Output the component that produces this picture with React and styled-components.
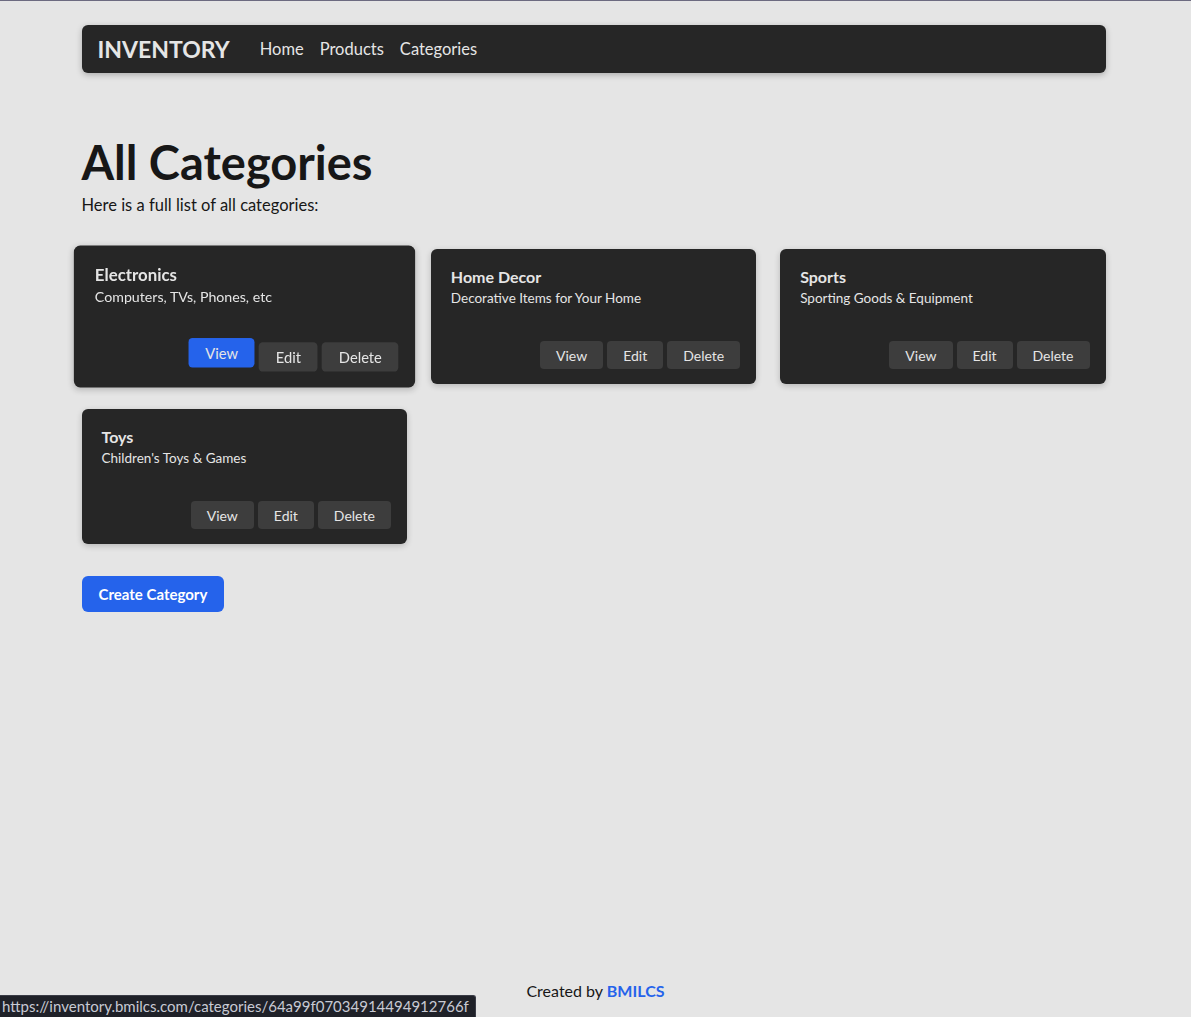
import React from "react";
import styled, { createGlobalStyle } from "styled-components";

const GlobalStyle = createGlobalStyle`
  * {
    box-sizing: border-box;
  }
  html, body {
    margin: 0;
    padding: 0;
  }
  body {
    background: #e5e5e5;
    color: #171717;
    font-family: Lato, "Noto Sans", sans-serif;
    border-top: 1px solid #6c6a80;
  }
`;

const Page = styled.div`
  min-height: calc(100vh - 1px);
  display: flex;
  flex-direction: column;
`;

const Main = styled.main`
  width: 1024px;
  margin: 0 0 0 calc(50% - 514px);
  padding-top: 24px;
  flex: 1;
`;

const Nav = styled.nav`
  height: 48px;
  background: #262626;
  border-radius: 6px;
  box-shadow: 0 2px 6px rgba(0, 0, 0, 0.25);
  display: flex;
  align-items: center;
  padding: 0 16px;
  gap: 30px;
`;

const Logo = styled.a`
  color: #e5e5e5;
  font-size: 23px;
  font-weight: 700;
  text-decoration: none;
`;

const NavLinks = styled.div`
  display: flex;
  gap: 16px;
`;

const NavLink = styled.a`
  color: #e5e5e5;
  font-size: 16.5px;
  text-decoration: none;
`;

const Title = styled.h1`
  margin: 66px 0 0;
  font-size: 47px;
  font-weight: 700;
  line-height: 1;
`;

const Subtitle = styled.p`
  margin: 9px 0 0;
  font-size: 16.5px;
`;

const Grid = styled.div`
  margin-top: 34px;
  display: grid;
  grid-template-columns: repeat(3, 1fr);
  column-gap: 24px;
  row-gap: 25px;
`;

const Card = styled.div`
  background: #262626;
  color: #e5e5e5;
  border-radius: 6px;
  height: 135px;
  padding: 18px 16px 15px 20px;
  display: flex;
  flex-direction: column;
  box-shadow: 0 2px 6px rgba(0, 0, 0, 0.2);
  transform: ${(p) => (p.$hover ? "scale(1.05)" : "none")};
`;

const CardTitle = styled.h3`
  margin: 0;
  font-size: 16px;
  font-weight: 700;
`;

const CardText = styled.p`
  margin: 4px 0 0;
  font-size: 13.5px;
`;

const Actions = styled.div`
  margin-top: auto;
  display: flex;
  justify-content: flex-end;
  align-items: flex-end;
  gap: 4px;
`;

const ActionButton = styled.button`
  height: 28px;
  padding: 0 16px;
  border: none;
  border-radius: 4px;
  font-family: inherit;
  font-size: 14px;
  color: #e5e5e5;
  background: ${(p) => (p.$active ? "#2563eb" : "#3d3d3d")};
  transform: ${(p) => (p.$active ? "translateY(-4px)" : "none")};
  cursor: pointer;
`;

const CreateButton = styled.button`
  margin-top: 32px;
  height: 36px;
  padding: 0 17px;
  border: none;
  border-radius: 6px;
  background: #2563eb;
  color: #ffffff;
  font-family: inherit;
  font-size: 15px;
  font-weight: 700;
  cursor: pointer;
`;

const Footer = styled.footer`
  text-align: center;
  font-size: 16px;
  padding: 16px 0 17px;
`;

const FooterLink = styled.a`
  color: #2563eb;
  font-weight: 700;
  text-decoration: none;
`;

const StatusBar = styled.div`
  position: fixed;
  left: 0;
  bottom: 0;
  background: #1f2128;
  color: #c8cad4;
  font-size: 15px;
  padding: 1px 6px 2px 2px;
  border-top-right-radius: 3px;
  border: 1px solid #3a3c46;
  border-left: none;
  border-bottom: none;
`;

const categories = [
  { name: "Electronics", desc: "Computers, TVs, Phones, etc", hover: true },
  { name: "Home Decor", desc: "Decorative Items for Your Home" },
  { name: "Sports", desc: "Sporting Goods & Equipment" },
  { name: "Toys", desc: "Children's Toys & Games" },
];

const App = () => {
  return (
    <>
      <GlobalStyle />
      <Page>
        <Main>
          <Nav>
            <Logo href="#">INVENTORY</Logo>
            <NavLinks>
              <NavLink href="#">Home</NavLink>
              <NavLink href="#">Products</NavLink>
              <NavLink href="#">Categories</NavLink>
            </NavLinks>
          </Nav>
          <Title>All Categories</Title>
          <Subtitle>Here is a full list of all categories:</Subtitle>
          <Grid>
            {categories.map((c) => (
              <Card key={c.name} $hover={c.hover}>
                <CardTitle>{c.name}</CardTitle>
                <CardText>{c.desc}</CardText>
                <Actions>
                  <ActionButton $active={c.hover}>View</ActionButton>
                  <ActionButton>Edit</ActionButton>
                  <ActionButton>Delete</ActionButton>
                </Actions>
              </Card>
            ))}
          </Grid>
          <CreateButton>Create Category</CreateButton>
        </Main>
        <Footer>
          Created by <FooterLink href="#">BMILCS</FooterLink>
        </Footer>
      </Page>
      <StatusBar>https://inventory.bmilcs.com/categories/64a99f07034914494912766f</StatusBar>
    </>
  );
};

export default App;
